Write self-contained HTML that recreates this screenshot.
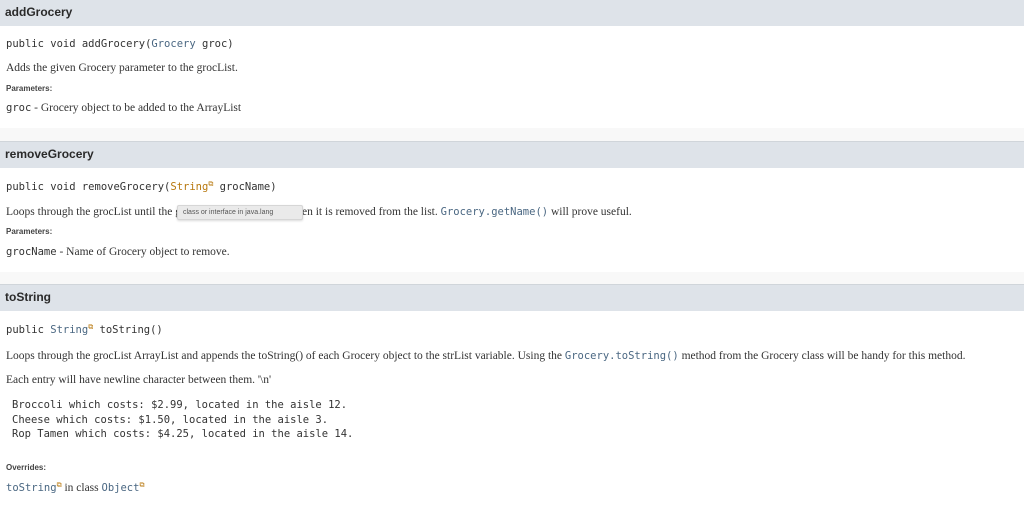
<!DOCTYPE html>
<html><head><meta charset="utf-8"><style>
body{margin:0;width:1024px;height:507px;background:#fff;position:relative;overflow:hidden;font-family:"Liberation Serif",serif;color:#353833}
.a{position:absolute;left:6px;white-space:nowrap;line-height:14px}
.h{position:absolute;left:0;width:1024px;height:26px;background:#dee3e9;border-top:1px solid #d0d5da}
.h span{position:absolute;left:5px;top:5px;font:bold 12px "Liberation Sans",sans-serif;color:#2a2a2a}
.band{position:absolute;left:0;width:1024px;background:#f8f8f8}
.m{font-family:"DejaVu Sans Mono","Liberation Mono",monospace;font-size:10.5px;color:#333}
.s{font-size:11.5px;color:#333}
.p{font:bold 8px "Liberation Sans",sans-serif;color:#444}
.l{color:#4a6782}
.o{color:#b8780e}
sup{font-size:7px;color:#b8780e;vertical-align:4px;line-height:0}
.tip{position:absolute;left:177px;top:205px;width:124px;height:13px;background:#eaeaea;border:1px solid #d6d6d6;border-radius:2px;font:7px "Liberation Sans",sans-serif;color:#555;line-height:13px;text-indent:5px;box-shadow:0 1px 2px rgba(0,0,0,.15)}
</style></head><body>
<div class="h" style="top:-1px"><span>addGrocery</span></div>
<div class="a m" style="top:37px">public void addGrocery(<span class="l">Grocery</span> groc)</div>
<div class="a s" style="top:61px">Adds the given Grocery parameter to the grocList.</div>
<div class="a p" style="top:84px">Parameters:</div>
<div class="a s" style="top:101px"><span class="m">groc</span> - Grocery object to be added to the ArrayList</div>
<div class="band" style="top:128px;height:14px"></div>
<div class="h" style="top:141px"><span>removeGrocery</span></div>
<div class="a m" style="top:180px">public void removeGrocery(<span class="o">String</span><sup>⧉</sup> grocName)</div>
<div class="a s" style="top:205px">Loops through the grocList until the g</div>
<div class="a s" style="top:205px;left:302px">en it is removed from the list. <span class="m l">Grocery.getName()</span> will prove useful.</div>
<div class="tip">class or interface in java.lang</div>
<div class="a p" style="top:227px">Parameters:</div>
<div class="a s" style="top:245px"><span class="m">grocName</span> - Name of Grocery object to remove.</div>
<div class="band" style="top:272px;height:13px"></div>
<div class="h" style="top:284px"><span>toString</span></div>
<div class="a m" style="top:323px">public <span class="l">String</span><sup>⧉</sup> toString()</div>
<div class="a s" style="top:349px">Loops through the grocList ArrayList and appends the toString() of each Grocery object to the strList variable. Using the <span class="m l">Grocery.toString()</span> method from the Grocery class will be handy for this method.</div>
<div class="a s" style="top:373px">Each entry will have newline character between them. '\n'</div>
<div class="a m" style="top:398px;left:12px;line-height:14.5px">Broccoli which costs: $2.99, located in the aisle 12.<br>Cheese which costs: $1.50, located in the aisle 3.<br>Rop Tamen which costs: $4.25, located in the aisle 14.</div>
<div class="a p" style="top:463px">Overrides:</div>
<div class="a s" style="top:481px"><span class="m l">toString</span><sup>⧉</sup> in class <span class="m l">Object</span><sup>⧉</sup></div>
</body></html>
